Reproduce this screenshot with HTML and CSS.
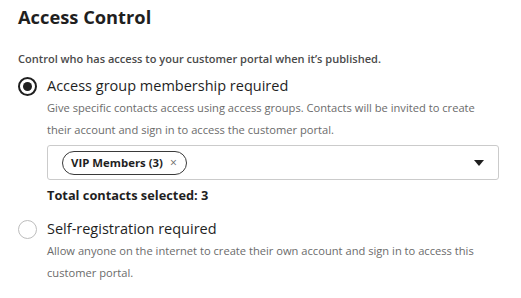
FILE: index.html
```html
<!DOCTYPE html>
<html>
<head>
<meta charset="utf-8">
<link rel="stylesheet" href="styles.css">
</head>
<body>
<div class="page">
  <h1 class="title">Access Control</h1>
  <p class="intro">Control who has access to your customer portal when it’s published.</p>
  <div class="option">
    <div class="option-head">
      <span class="radio checked"></span>
      <span class="option-label">Access group membership required</span>
    </div>
    <div class="option-body">
      <p class="desc">Give specific contacts access using access groups. Contacts will be invited to create their account and sign in to access the customer portal.</p>
      <div class="select">
        <span class="tag">VIP Members (3)<span class="tag-x">×</span></span>
        <svg class="caret" width="10" height="6" viewBox="0 0 10 6"><path d="M0 0 H10 L5 6 Z" fill="#1f1f1f"/></svg>
      </div>
      <p class="total">Total contacts selected: 3</p>
    </div>
  </div>
  <div class="option second">
    <div class="option-head">
      <span class="radio"></span>
      <span class="option-label">Self-registration required</span>
    </div>
    <div class="option-body">
      <p class="desc">Allow anyone on the internet to create their own account and sign in to access this customer portal.</p>
    </div>
  </div>
</div>
</body>
</html>
```
FILE: styles.css
```css
* { box-sizing: border-box; }
html, body { margin: 0; background: #fff; }
body { font-family: "Open Sans", "Noto Sans", sans-serif; color: #1f1f1f; }
.page { padding: 5px 22px 0 18px; }
.title { margin: 0; font-size: 18.3px; font-weight: 700; line-height: 24px; }
.intro { margin: 21px 0 0; font-size: 11.05px; font-weight: 600; color: #4a4a4a; line-height: 18px; }
.option { margin-top: 8px; }
.option-head { display: flex; align-items: center; gap: 10px; height: 20px; }
.radio { width: 19px; height: 19px; border-radius: 50%; border: 1.5px solid #bdbdbd; display: inline-flex; align-items: center; justify-content: center; flex: none; }
.radio.checked { border: 2px solid #1f1f1f; }
.radio.checked::after { content: ""; width: 9px; height: 9px; border-radius: 50%; background: #1f1f1f; }
.option-label { font-size: 14.5px; line-height: 20px; }
.option-body { padding-left: 29px; }
.desc { margin: 1px 0 0; font-size: 11.15px; line-height: 22px; color: #6b6b6b; }
.select { margin-top: 4px; height: 35px; border: 1px solid #cbcbcb; border-radius: 3px; display: flex; align-items: center; justify-content: space-between; padding: 0 14px 0 14px; }
.tag { display: inline-flex; align-items: center; height: 24px; border: 1px solid #3a3a3a; border-radius: 12px; padding: 0 9px 0 8px; font-size: 11.4px; font-weight: 700; }
.tag-x { font-weight: 400; color: #6b6b6b; margin-left: 7px; font-size: 12px; }
.total { margin: 6px 0 0; font-size: 12.8px; font-weight: 700; line-height: 18px; }
.option.second { margin-top: 15px; }
```
